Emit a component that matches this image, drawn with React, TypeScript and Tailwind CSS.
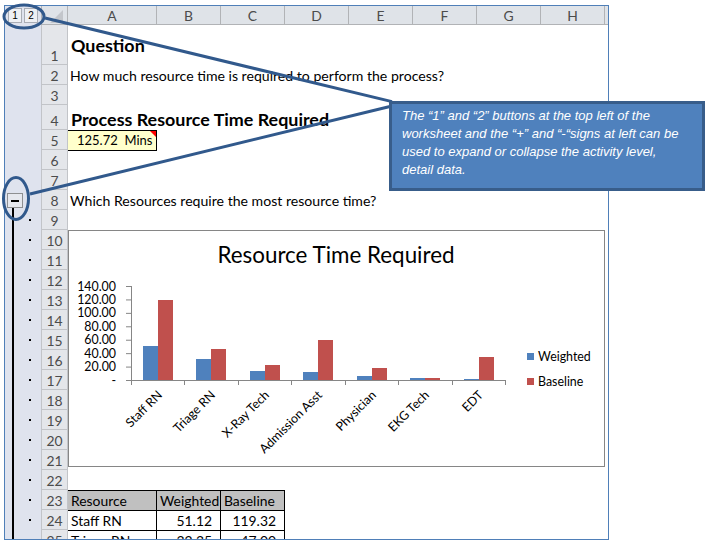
import type { ReactNode } from 'react';

const font = "font-['Lato','Open_Sans',sans-serif]";
const columns = [
  { name: 'A', width: 'w-[89px]' },
  { name: 'B', width: 'w-[64px]' },
  { name: 'C', width: 'w-[64px]' },
  { name: 'D', width: 'w-[64px]' },
  { name: 'E', width: 'w-[64px]' },
  { name: 'F', width: 'w-[64px]' },
  { name: 'G', width: 'w-[64px]' },
  { name: 'H', width: 'w-[64px]' },
];

const chartData = [
  { name: 'Staff RN', x: 143, blue: 346, red: 300 },
  { name: 'Triage RN', x: 196, blue: 359, red: 349 },
  { name: 'X-Ray Tech', x: 250, blue: 371, red: 365 },
  { name: 'Admission Asst', x: 303, blue: 372, red: 340 },
  { name: 'Physician', x: 357, blue: 376, red: 368 },
  { name: 'EKG Tech', x: 410, blue: 378, red: 378 },
  { name: 'EDT', x: 464, blue: 379, red: 357 },
];

const axisLabels = ['140.00', '120.00', '100.00', '80.00', '60.00', '40.00', '20.00', '-'];

function Label({ children }: { children: ReactNode }) {
  return <div className="pl-[2px] pt-[1px] text-[14.1px] whitespace-nowrap text-black">{children}</div>;
}

function Heading({ children, className }: { children: ReactNode; className: string }) {
  return <div className={`pl-[3px] text-[17.9px] font-bold whitespace-nowrap text-black ${className}`}>{children}</div>;
}

function TableRow({ cells, head }: { cells: string[]; head?: boolean }) {
  const bg = head ? 'bg-[#c0c0c0]' : 'bg-white';
  const cell = `h-[21px] shrink-0 border-black border-t border-r text-[13.9px] text-black leading-[20px] whitespace-nowrap ${bg}`;
  const num = head ? 'pl-[3px]' : 'pr-[8px] text-right text-[13.4px]';
  return (
    <div className="flex h-[20px] self-start">
      <div className={`${cell} w-[89px] pl-[3px]`}>{cells[0]}</div>
      <div className={`${cell} w-[64px] ${num}`}>{cells[1]}</div>
      <div className={`${cell} w-[64px] ${num}`}>{cells[2]}</div>
    </div>
  );
}

const rows: { n: number; h: string; content?: ReactNode; end?: boolean }[] = [
  { n: 1, h: 'h-[40px]', content: <Heading className="pb-[6px]">Question</Heading>, end: true },
  { n: 2, h: 'h-[20px]', content: <Label>How much resource time is required to perform the process?</Label> },
  { n: 3, h: 'h-[20px]' },
  { n: 4, h: 'h-[25px]', content: <Heading className="pt-[3px]">Process Resource Time Required</Heading> },
  {
    n: 5,
    h: 'h-[20px]',
    content: (
      <div className="relative h-[21px] w-[89px] border border-l-0 border-black bg-[#ffffcc] pl-[9px] text-[13px] leading-[19px] whitespace-pre text-black">
        125.72  Mins
        <div className="absolute right-0 top-0 h-0 w-0 border-l-[6px] border-t-[6px] border-l-transparent border-t-[#ff0000]" />
      </div>
    ),
  },
  { n: 6, h: 'h-[20px]' },
  { n: 7, h: 'h-[20px]' },
  { n: 8, h: 'h-[20px]', content: <Label>Which Resources require the most resource time?</Label> },
  ...Array.from({ length: 14 }, (_, i) => ({ n: i + 9, h: 'h-[20px]' })),
  { n: 23, h: 'h-[20px]', content: <TableRow head cells={['Resource', 'Weighted', 'Baseline']} /> },
  { n: 24, h: 'h-[20px]', content: <TableRow cells={['Staff RN', '51.12', '119.32']} /> },
  { n: 25, h: 'h-[20px]', content: <TableRow cells={['Triage RN', '32.35', '47.00']} /> },
];

function Gutter({ n }: { n: number }) {
  if (n < 8) return <div className="w-[36px] shrink-0 bg-[#dfe3ee]" />;
  if (n === 8) {
    return (
      <div className="flex w-[36px] shrink-0 flex-col bg-[#dfe3ee] pl-[2px] pt-[3px]">
        <div className="flex h-[15px] w-[16px] items-center justify-center border border-[#8e8f91] bg-[#e6e8ee]">
          <div className="h-[2px] w-[8px] bg-black" />
        </div>
        <div className="ml-[5px] h-[2px] w-[2px] bg-black" />
      </div>
    );
  }
  return (
    <div className="flex w-[36px] shrink-0 items-center bg-[#dfe3ee]">
      <div className="ml-[7px] w-[2px] self-stretch bg-black" />
      <div className="ml-[15px] h-[2px] w-[2px] bg-black" />
    </div>
  );
}

function Chart() {
  return (
    <svg className="absolute left-[62px] top-[223px]" width="539" height="239" viewBox="67 229 539 239">
      <rect x="68.5" y="230.5" width="536" height="236" fill="white" stroke="#868686" />
      <text x="336" y="263" textAnchor="middle" fontSize="22.4" fill="#000" fontFamily="Lato, sans-serif">
        Resource Time Required
      </text>
      {axisLabels.map((label, i) => (
        <g key={label}>
          <text x="116" y={290.5 + i * 13.43} textAnchor="end" fontSize="12.4" fill="#000" fontFamily="Lato, sans-serif">
            {label}
          </text>
          <line x1="126" x2="131" y1={286.5 + i * 13.43} y2={286.5 + i * 13.43} stroke="#868686" />
        </g>
      ))}
      <line x1="131.5" x2="131.5" y1="286" y2="381" stroke="#868686" />
      <line x1="131" x2="506" y1="380.5" y2="380.5" stroke="#868686" />
      {[131, 184, 238, 291, 345, 398, 452, 505].map((x) => (
        <line key={x} x1={x + 0.5} x2={x + 0.5} y1="380" y2="385" stroke="#868686" />
      ))}
      {chartData.map((d) => (
        <g key={d.name}>
          <rect x={d.x} y={d.blue} width="15" height={380 - d.blue} fill="#4f81bd" />
          <rect x={d.x + 15} y={d.red} width="15" height={380 - d.red} fill="#c0504d" />
          <text
            transform={`rotate(-45 ${d.x + 17} 393)`}
            x={d.x + 17}
            y="397"
            textAnchor="end"
            fontSize="12.4"
            fill="#000"
            fontFamily="Lato, sans-serif"
          >
            {d.name}
          </text>
        </g>
      ))}
      <rect x="527" y="353" width="7" height="7" fill="#4f81bd" />
      <text x="538" y="361" fontSize="12.4" fill="#000" fontFamily="Lato, sans-serif">Weighted</text>
      <rect x="527" y="378" width="7" height="7" fill="#c0504d" />
      <text x="538" y="385.5" fontSize="12.4" fill="#000" fontFamily="Lato, sans-serif">Baseline</text>
    </svg>
  );
}

export default function App() {
  return (
    <div className={`relative h-[544px] w-[708px] overflow-hidden bg-white pl-[4px] pt-[5px] ${font}`}>
      <div className="relative h-[535px] w-[605px] overflow-hidden border border-[#4f7fb8] bg-white">
        {/* column headers */}
        <div className="flex h-[19px] bg-[#dfe3e8]">
          <div className="flex w-[36px] shrink-0 items-start gap-[2px] bg-[#dfe3ee] pl-[3px] pt-[2px]">
            {['1', '2'].map((b) => (
              <div
                key={b}
                className="flex h-[15px] w-[14px] items-center justify-center border border-[#a9adb5] bg-[#eef0f4] font-['Liberation_Sans'] text-[10px] text-black"
              >
                {b}
              </div>
            ))}
          </div>
          <div className="relative w-[27px] shrink-0 border-b border-r border-[#b1b3b6] border-l bg-[#dfe3e8]">
            <div className="absolute bottom-[1px] right-[4px] h-0 w-0 border-b-[13px] border-l-[13px] border-b-[#c3c6cb] border-l-transparent" />
          </div>
          {columns.map((c) => (
            <div
              key={c.name}
              className={`${c.width} shrink-0 border-b border-r border-[#b1b3b6] text-center text-[13.9px] leading-[20px] text-[#4c4c4c]`}
            >
              {c.name}
            </div>
          ))}
          <div className="flex-1 border-b border-[#b1b3b6]" />
        </div>

        {/* rows */}
        {rows.map((r) => (
          <div key={r.n} className={`flex ${r.h}`}>
            <Gutter n={r.n} />
            <div className="flex w-[27px] shrink-0 items-end justify-center border-b border-l border-r border-[#c2c4c8] bg-[#e4e6ea] text-[13.9px] leading-[17px] text-[#4c4c4c]">
              {r.n}
            </div>
            <div className={`flex min-w-0 flex-1 flex-col ${r.end ? 'justify-end' : 'justify-center'}`}>
              {r.content}
            </div>
          </div>
        ))}

        <Chart />
      </div>

      {/* callout and pointer lines */}
      <svg className="pointer-events-none absolute left-0 top-0" width="708" height="544">
        <ellipse cx="24" cy="16.5" rx="20" ry="11.5" fill="none" stroke="#31598c" strokeWidth="3" />
        <ellipse cx="16" cy="198.5" rx="12.5" ry="21" fill="none" stroke="#31598c" strokeWidth="3" />
        <line x1="45" y1="18" x2="392" y2="101.6" stroke="#31598c" strokeWidth="3" />
        <line x1="30" y1="194" x2="392" y2="106" stroke="#31598c" strokeWidth="3" />
      </svg>
      <div className="absolute left-[389px] top-[101px] h-[90px] w-[316px] border-[3px] border-[#385d8a] bg-[#4f81bd] pl-[10px] pt-[3px] font-['Liberation_Sans'] text-[13px] italic leading-[18px] text-white">
        The “1” and “2” buttons at the top left of the
        <br />
        worksheet and the “+” and “-“signs at left can be
        <br />
        used to expand or collapse the activity level,
        <br />
        detail data.
      </div>
    </div>
  );
}
